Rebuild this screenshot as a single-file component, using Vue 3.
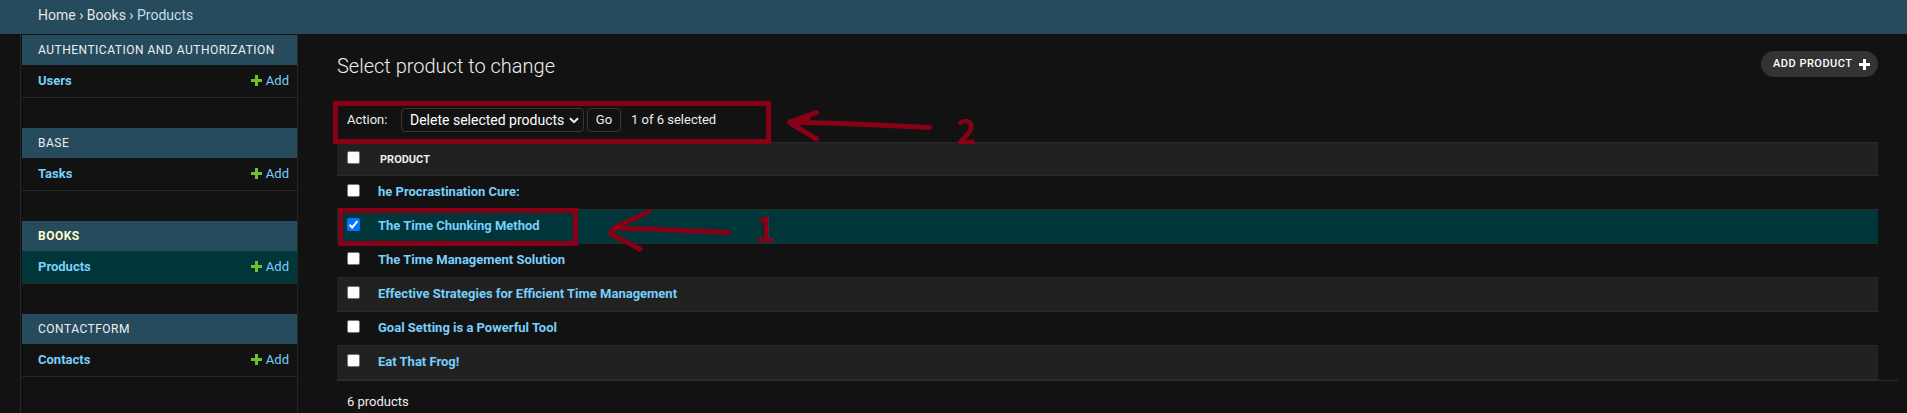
<script setup>
const apps = [
  { name: 'Authentication and Authorization', model: 'Users' },
  { name: 'Base', model: 'Tasks' },
  { name: 'Books', model: 'Products', current: true },
  { name: 'Contactform', model: 'Contacts' },
]
const products = [
  { name: 'he Procrastination Cure:' },
  { name: 'The Time Chunking Method', selected: true },
  { name: 'The Time Management Solution' },
  { name: 'Effective Strategies for Efficient Time Management' },
  { name: 'Goal Setting is a Powerful Tool' },
  { name: 'Eat That Frog!' },
]
</script>

<template>
  <div class="page">
    <nav class="breadcrumbs"><a>Home</a> › <a>Books</a> › <span>Products</span></nav>
    <div class="main">
      <aside class="sidebar">
        <section v-for="app in apps" :key="app.name" class="module" :class="{ current: app.current }">
          <h2>{{ app.name }}</h2>
          <div class="model">
            <a class="model-name">{{ app.model }}</a>
            <a class="add">
              <svg width="11" height="11" viewBox="0 0 11 11"><path d="M4 0h3v4h4v3H7v4H4V7H0V4h4z" fill="#70bf2b" /></svg>
              <span>Add</span>
            </a>
          </div>
        </section>
      </aside>
      <main class="content">
        <div class="title-row">
          <h1>Select product to change</h1>
          <a class="add-product">
            <span>Add product</span>
            <svg width="11" height="11" viewBox="0 0 11 11"><path d="M4 0h3v4h4v3H7v4H4V7H0V4h4z" fill="#fff" /></svg>
          </a>
        </div>
        <div class="actions">
          <span class="label">Action:</span>
          <div class="select">
            <span>Delete selected products</span>
            <svg width="10" height="7" viewBox="0 0 10 7"><path d="M1 1.2l4 4 4-4" fill="none" stroke="#eee" stroke-width="2" /></svg>
          </div>
          <button class="go">Go</button>
          <span class="counter">1 of 6 selected</span>
        </div>
        <div class="results">
          <div class="row head"><i class="box"></i><span>Product</span></div>
          <div v-for="p in products" :key="p.name" class="row" :class="{ selected: p.selected }">
            <i class="box" :class="{ checked: p.selected }">
              <svg v-if="p.selected" width="13" height="13" viewBox="0 0 13 13"><path d="M2.5 6.8l2.7 2.7 5.2-6.3" fill="none" stroke="#fff" stroke-width="2" /></svg>
            </i>
            <a>{{ p.name }}</a>
          </div>
        </div>
        <p class="paginator">6 products</p>
      </main>
    </div>
    <svg class="marks" width="1907" height="413" viewBox="0 0 1907 413">
      <g fill="none" stroke="#880015" stroke-width="5">
        <path d="M335.500 103.500H768.500V141.500H335.500z" />
        <path d="M340.500 210.500H575.500V243.500H340.500z" />
        <g stroke-linecap="round" stroke-linejoin="round">
          <path d="M929.500 127.500L855 124L789.500 122L816.500 112.500M789.500 122.500L816.500 139M795 122.500L808 119" />
          <path d="M728.500 232.500L660 229.500L613.500 228L648.500 212M613.500 229L610.500 234L640 249" />
        </g>
      </g>
      <text x="956" y="143.500">2</text>
      <text x="755" y="241.500">1</text>
    </svg>
  </div>
</template>

<style>
body { background: #121212; overflow: hidden; }
</style>

<style scoped>
.page { position: relative; height: 413px; overflow: hidden; background: #121212; color: #eee; font: 13px/15px Roboto, "Liberation Sans", sans-serif; display: flex; flex-direction: column; box-sizing: border-box; }
.page * { box-sizing: border-box; }
.breadcrumbs { flex: none; height: 34px; padding: 7px 38px; background: #264b5d; color: #e4e4e4; font-size: 14px; line-height: 17px; }
.breadcrumbs span { color: #c4dce8; }
.main { display: flex; flex: 1; min-height: 0; }
.sidebar { width: 278px; flex: none; margin-left: 20px; padding: 1px 0 0 1px; border-left: 1px solid #272727; border-right: 1px solid #272727; overflow: hidden; }
.module { margin-bottom: 30px; }
.module h2 { margin: 0; height: 30px; padding: 7px 16px; background: #264b5d; font-size: 12px; line-height: 16px; font-weight: 400; letter-spacing: .5px; text-transform: uppercase; white-space: nowrap; }
.current h2 { color: #ffc; font-weight: 700; }
.model { display: flex; justify-content: space-between; height: 33px; padding: 8px 8px 8px 16px; border-bottom: 1px solid #272727; color: #79cffb; }
.current .model { background: #00363a; }
.model-name { font-weight: 700; }
.add { display: flex; gap: 4px; font-size: 13px; }
.add svg { margin-top: 2px; }
.content { flex: 1; padding: 20px 9px 0 39px; min-width: 0; }
.title-row { display: flex; justify-content: space-between; height: 47px; margin-right: 20px; }
h1 { margin: 0; font-size: 20px; line-height: 24px; font-weight: 300; }
.add-product { display: flex; gap: 6px; width: 117px; height: 26px; margin-top: -3px; padding: 5px 8px 5px 12px; border-radius: 13px; background: #333; color: #fff; font-size: 11px; line-height: 15px; font-weight: 500; letter-spacing: .5px; text-transform: uppercase; white-space: nowrap; }
.add-product svg { margin-top: 3px; flex: none; }
.actions { display: flex; height: 41px; padding: 7px 10px; }
.label { width: 54px; line-height: 24px; }
.select { display: flex; justify-content: space-between; align-items: center; width: 183px; height: 24px; padding: 0 4px 0 8px; border: 1px solid #383838; border-radius: 4px; color: #fff; font-size: 14px; white-space: nowrap; }
.go { width: 34px; height: 24px; margin: 0 10px 0 3px; padding: 0; border: 1px solid #383838; border-radius: 4px; background: #121212; color: #eee; font: 13px/22px Roboto, sans-serif; }
.counter { line-height: 23px; }
.results { border-bottom: 1px solid #2a2a2a; }
.row { display: flex; gap: 18px; height: 34px; margin-right: 20px; padding: 8px 10px 0; border-bottom: 1px solid #2a2a2a; }
.row:nth-child(odd) { background: #212121; }
.row a { color: #79cffb; font-weight: 700; line-height: 15px; }
.row.head { border-top: 1px solid #2a2a2a; gap: 20px; font-size: 11px; font-weight: 700; text-transform: uppercase; }
.row.head span { margin-top: 1px; }
.row.selected { background: #00363a; }
.box { width: 13px; height: 13px; flex: none; border: 1px solid #767676; border-radius: 2px; background: #fff; }
.box.checked { border: 0; background: #0075ff; }
.box svg { display: block; }
.paginator { margin: 13px 10px 0; line-height: 16px; }
.marks { position: absolute; left: 0; top: 0; pointer-events: none; }
.marks text { fill: #880015; font: 700 34px "Noto Sans CJK SC", sans-serif; }
</style>
